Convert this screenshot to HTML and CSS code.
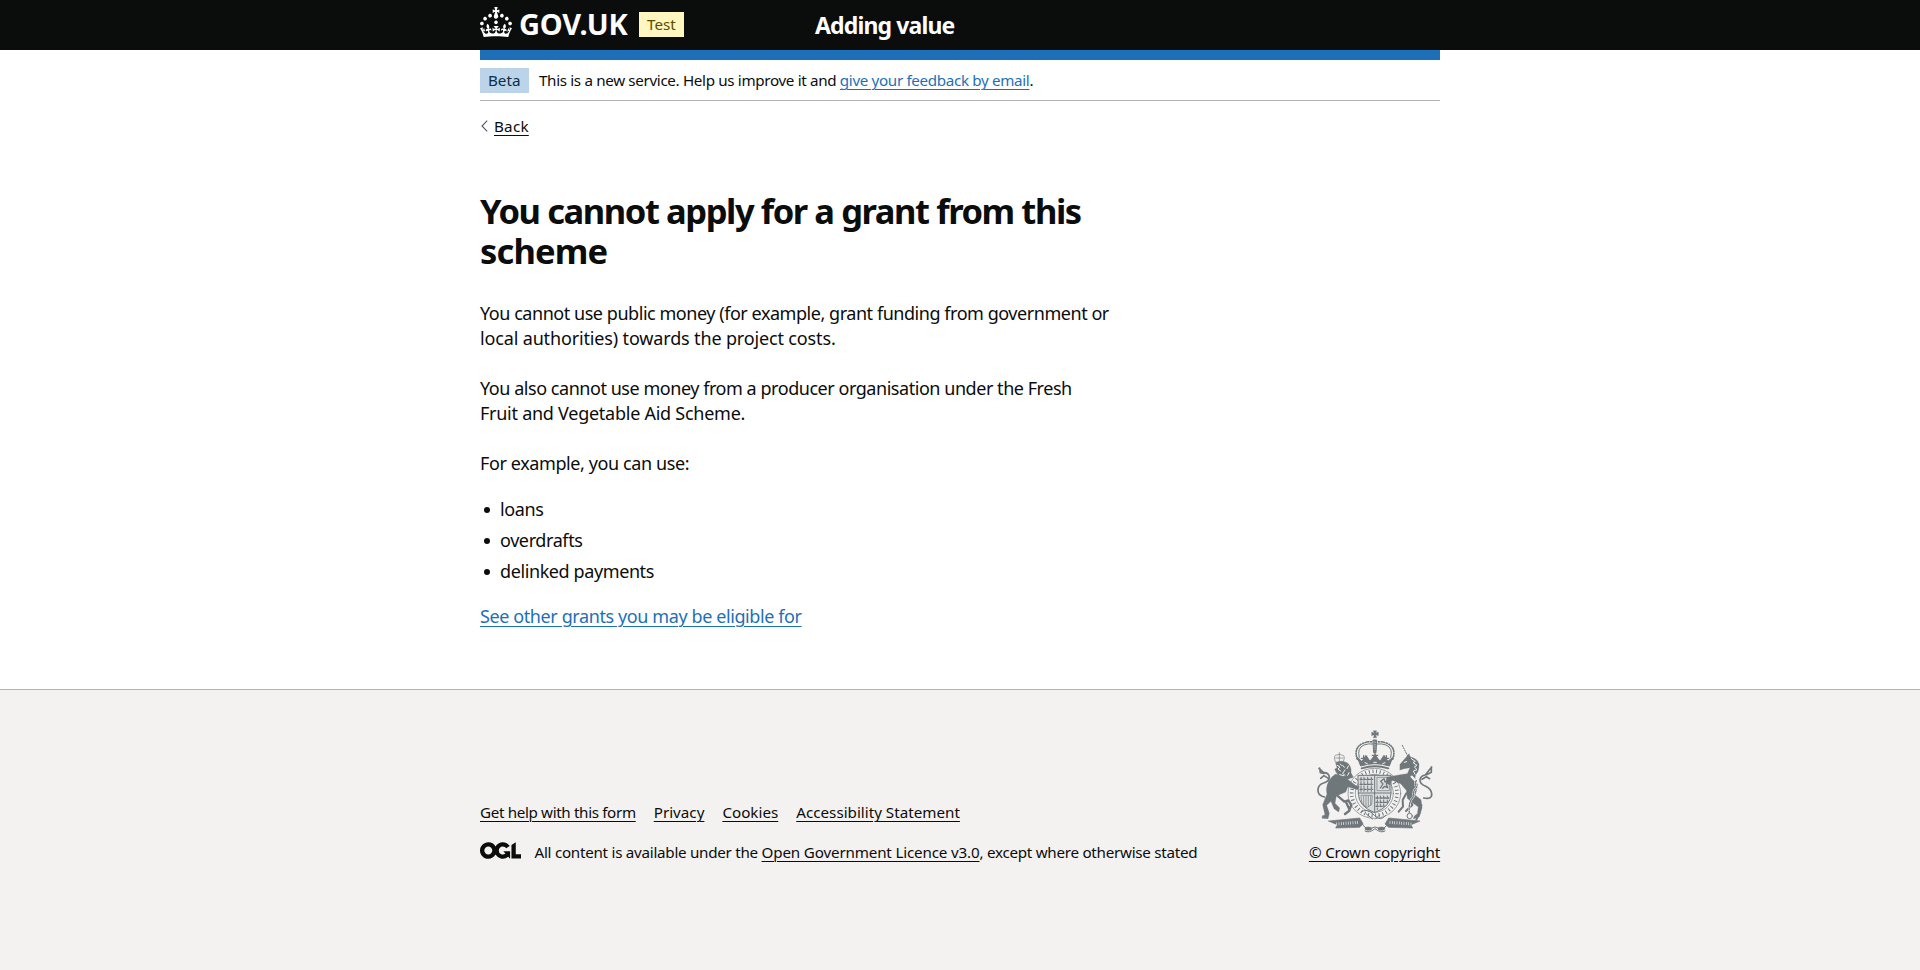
FILE: index.html
```html
<!DOCTYPE html>
<html lang="en">
<head>
<meta charset="utf-8">
<title>You cannot apply for a grant from this scheme</title>
<link rel="stylesheet" href="styles.css">
</head>
<body>
<header class="header">
  <div class="container header-inner">
    <div class="header-logo">
      <svg class="crown" viewBox="0 0 32 30" width="32" height="30" aria-hidden="true"><path fill="#fff" d="M22.6 10.4c-1 .4-2-.1-2.4-1-.4-.9.1-2 1-2.4.9-.4 2 .1 2.4 1s-.1 2-1 2.4m-5.9 6.7c-.9.4-2-.1-2.4-1-.4-.9.1-2 1-2.4.9-.4 2 .1 2.4 1s-.1 2-1 2.4m10.8-3.7c-1 .4-2-.1-2.4-1-.4-.9.1-2 1-2.4.9-.4 2 .1 2.4 1s0 2-1 2.4m3.3 4.8c-1 .4-2-.1-2.4-1-.4-.9.1-2 1-2.4.9-.4 2 .1 2.4 1s-.1 2-1 2.4M17 4.7l2.3 1.2V2.5l-2.3.7-.2-.2.9-3h-3.4l.9 3-.2.2c-.1.1-2.3-.7-2.3-.7v3.4L15 4.7c.1.1.1.2.2.2l-1.3 4c-.1.2-.1.4-.1.6 0 1.1.8 2 1.9 2.2h.7c1-.2 1.9-1.1 1.9-2.1 0-.2 0-.4-.1-.6l-1.3-4c-.1-.2 0-.2.1-.3m-7.6 5.7c.9.4 2-.1 2.4-1 .4-.9-.1-2-1-2.4-.9-.4-2 .1-2.4 1s0 2 1 2.4m-5 3c.9.4 2-.1 2.4-1 .4-.9-.1-2-1-2.4-.9-.4-2 .1-2.4 1s.1 2 1 2.4m-3.2 4.8c.9.4 2-.1 2.4-1 .4-.9-.1-2-1-2.4-.9-.4-2 .1-2.4 1s0 2 1 2.4m14.8 11c4.4 0 8.6.3 12.3.8 1.1-4.5 2.4-7 3.7-8.8l-2.5-.9c.2 1.3.3 1.9 0 2.7-.4-.4-.8-1.1-1.1-2.3l-1.2 4c.7-.5 1.3-.8 2-.9-1.1 2.5-2.6 3.1-3.5 3-1.1-.2-1.7-1.2-1.5-2.1.3-1.2 1.5-1.5 2.1-.1 1.1-2.3-.8-3-2-2.3 1.9-1.9 2.1-3.5.6-5.6-2.1 1.6-2.1 3.2-1.2 5.5-1.2-1.4-3.2-.6-2.5 1.6.9-1.4 2.1-.5 1.9.8-.2 1.1-1.7 2.1-3.5 1.9-2.7-.2-2.9-2.1-2.9-3.6.7-.1 1.9.5 2.9 1.9l.4-4.3c-1.1 1.1-2.1 1.4-3.2 1.4.4-1.2 2.1-3 2.1-3h-5.4s1.7 1.9 2.1 3c-1.1 0-2.1-.2-3.2-1.4l.4 4.3c1-1.4 2.2-2 2.9-1.9-.1 1.5-.2 3.4-2.9 3.6-1.9.2-3.4-.8-3.5-1.9-.2-1.3 1-2.2 1.9-.8.7-2.3-1.2-3-2.5-1.6.9-2.2.9-3.9-1.2-5.5-1.5 2-1.3 3.7.6 5.6-1.2-.7-3.1 0-2 2.3.6-1.4 1.8-1.1 2.1.1.2.9-.3 1.9-1.5 2.1-.9.2-2.4-.5-3.5-3 .6 0 1.2.3 2 .9l-1.2-4c-.3 1.1-.7 1.9-1.1 2.3-.3-.8-.2-1.4 0-2.7l-2.9.9C1.3 23 2.6 25.5 3.7 30c3.7-.5 7.9-.8 12.3-.8"/></svg>
      <span class="logotype">GOV.UK</span>
      <strong class="tag tag-test">Test</strong>
    </div>
    <a class="service-name">Adding value</a>
  </div>
</header>
<div class="container">
  <div class="brand-bar"></div>
  <div class="phase-banner">
    <strong class="tag tag-beta">Beta</strong>
    <span class="phase-text">This is a new service. Help us improve it and <a class="link">give your feedback by email</a>.</span>
  </div>
  <div class="back">
    <svg class="chevron" viewBox="0 0 7 12" width="7" height="12" aria-hidden="true"><path d="M6.2 .6L1 6l5.200 5.400" fill="none" stroke="#505a5f" stroke-width="1.1"/></svg>
    <a class="link-dark back-link">Back</a>
  </div>
  <main class="main">
    <h1 class="heading">You cannot apply for a grant from this<br><span class="heading-end">scheme</span></h1>
    <p class="body">You cannot use public money (for example, grant funding from government or<br><span class="loose">local authorities) towards the project costs.</span></p>
    <p class="body">You also cannot use money from a producer organisation under the Fresh<br><span class="semi-loose">Fruit and Vegetable Aid Scheme.</span></p>
    <p class="body short">For example, you can use:</p>
    <ul class="list">
      <li>loans</li>
      <li>overdrafts</li>
      <li>delinked payments</li>
    </ul>
    <p class="body short"><a class="link">See other grants you may be eligible for</a></p>
  </main>
</div>
<footer class="footer">
  <div class="container footer-inner">
    <div class="footer-meta">
      <div class="footer-links">
        <a class="link-dark help-link">Get help with this form</a>
        <a class="link-dark">Privacy</a>
        <a class="link-dark">Cookies</a>
        <a class="link-dark">Accessibility Statement</a>
      </div>
      <div class="licence">
        <svg class="ogl" viewBox="0 0 483.2 195.7" width="41" height="17" aria-hidden="true"><path fill="#0b0c0c" d="M421.5 142.8V.1l-50.7 32.3v161.1h112.4v-50.7zm-122.3-9.6A47.12 47.12 0 0 1 221 97.8c0-26 21.1-47.1 47.1-47.1 16.7 0 31.4 8.7 39.7 21.8l42.7-27.2A97.63 97.63 0 0 0 268.1 0c-36.5 0-68.3 20.1-85.1 49.700A98 98 0 0 0 97.800 0C43.900 0 0 43.900 0 97.800s43.900 97.800 97.800 97.800c36.500 0 68.300-20.100 85.100-49.700a97.760 97.760 0 0 0 149.600 25.400l19.400 22.200h3v-87.800h-80zM97.800 145c-26 0-47.100-21.100-47.100-47.100s21.100-47.100 47.100-47.100 47.200 21 47.200 47S123.800 145 97.800 145"/></svg>
        <span class="licence-text">All content is available under the <a class="link-dark licence-link">Open Government Licence v3.0</a>, except where otherwise stated</span>
      </div>
    </div>
    <div class="copyright">
      <svg class="arms" viewBox="80 42 352 312" width="118" height="104" aria-hidden="true">
        <g fill="none" stroke="#6f777b" stroke-linecap="round" stroke-linejoin="round">
          <!-- crown -->
          <path d="M251 44h10l-3 7 8-3v11l-8-3 3 9h-10l3-9-8 3V48l8 3z" fill="#6f777b" stroke-width="1"/>
          <path d="M251 72h10l-2 38h-6z" fill="#6f777b" stroke-width="3"/>
          <path d="M256 78v22" stroke="#f3f2f1" stroke-width="2" stroke-dasharray="2 5"/>
          <path d="M203 130q-12-34 15-47 20-9 32-4M309 130q12-34-15-47-20-9-32-4" stroke-width="5" stroke-dasharray="3 5"/>
          <path d="M209 124q-8-28 14-37 13-5 26-3M303 124q8-28-14-37-13-5-26-3" stroke-width="3"/>
          <path d="M203 124l10 26q43-14 86 0l10-26-14 12-12-18-12 18-15-20-15 20-12-18-12 18z" fill="#6f777b" stroke-width="3"/>
          <path d="M216 157q40-12 80 0" stroke-width="6"/>
          <path d="M222 119v16M290 119v16M256 106v26M215 127h14M283 127h14M248 118h16" stroke-width="4"/>
          <path d="M226 140l7 3M252 139h8M279 143l7-3" stroke="#f3f2f1" stroke-width="3"/>
          <!-- garter -->
          <ellipse cx="254" cy="232" rx="79" ry="75" stroke-width="2"/>
          <ellipse cx="254" cy="232" rx="57" ry="57" stroke-width="2"/>
          <ellipse cx="254" cy="232" rx="68" ry="66" stroke-width="11" stroke-dasharray="3 8" stroke-linecap="butt"/>
          <!-- shield -->
          <path d="M206 178h98v54q0 40-49 58-49-18-49-58z" fill="#dcddde" stroke-width="3"/>
          <path d="M255 178v111M206 231h98" stroke-width="3"/>
          <path d="M214 184v42M223 184v42M234 184v42M245 184v42" stroke-width="3" stroke-dasharray="9 4"/>
          <path d="M211 190h38M211 205h38M211 220h38" stroke-width="4" stroke-dasharray="7 5"/>
          <rect x="263" y="184" width="36" height="40" stroke-width="2"/>
          <path d="M272 216l8-12-7-8 10-8 3 10 8-5-4 12 4 10-9-4-6 6" stroke-width="4"/>
          <path d="M215 238h33l-2 28-15 9-14-15z" stroke-width="2"/>
          <path d="M222 240v28M229 240v32M236 240v32M243 240v28" stroke-width="2"/>
          <path d="M263 240v40M272 240v36M282 240v30M293 240v20" stroke-width="3" stroke-dasharray="8 4"/>
          <path d="M259 246h38M259 259h36M259 271h26" stroke-width="4" stroke-dasharray="7 5"/>
          <path d="M214 288q20-14 40 10 20 20 34 0M229 293l20 16M258 309l12-13" stroke-width="3"/>
          <!-- lion -->
          <path d="M137 137q-8-20 5-20 7-4 14 0 13 0 5 20zM149 110v27M138 126h22" stroke-width="2"/>
          <path d="M138 140q18-9 34 0 14 10 12 30l7 14-17 6 23 18 12 4-6 9-28-9-7 16-28 12-4 22 14 14-3 12-14-10-9-22-13 12 8 24-4 16-18-1 1-8 8-2-7-31 13-32q-5-20 5-38 10-16 24-24l-6-12 7-5z" fill="#6f777b" stroke-width="1"/>
          <path d="M143 239l21 18 12-4 9 14-7 18-12 9M170 260l10 22" stroke-width="7"/>
          <path d="M143 148l8 5-6 6 8 6M159 148l5 6M166 162l-7 10 7 6M150 176l12 3M176 150l-4 8M134 170l8 4M178 170l-4 8M152 144l3 4" stroke="#f3f2f1" stroke-width="3"/>
          <path d="M104 243q-21-6-19-23 2-15 17-19 18-6 17-18-3-14-17-13l-14-13M90 156l2 14 11 2M117 188l-14-9-10 8" stroke-width="5"/>
          <!-- unicorn -->
          <path d="M338 88l17 34" stroke-width="3" stroke-dasharray="4 4"/>
          <path d="M331 145l21-24 6-8 4 10q22 4 26 22 1 20-10 31-6 13 6 30-3 19-8 31l18 14 3 24-8 27-18 7 3-9 9-7 3-20-19-14-14-12-3-24-17-20-29-12-2 16-13-5 2-18 41-8 21-3 8-18-18 3-12 4z" fill="#6f777b" stroke-width="1"/>
          <path d="M350 232l-11 20 1 20-13 15M360 245l8 22-19 18M395 267l-6 26-9 18" stroke-width="6"/>
          <path d="M365 128l12 8-7 4 12 8-8 5 8 8-11 4 5 10M344 139l7-2" stroke="#f3f2f1" stroke-width="3"/>
          <path d="M380 194q-7 12 1 20-13 12-8 26-18 18-14 49M366 182l15 16" stroke="#f3f2f1" stroke-width="7"/>
          <path d="M380 194q-7 12 1 20-13 12-8 26-18 18-14 49" stroke-width="4" stroke-dasharray="5 4"/>
          <circle cx="360" cy="300" r="8" stroke-width="3"/>
          <path d="M402 246q26 5 24-13-2-15-18-22-18-7-17-20 2-12 16-14l19-24M425 153v16l-14 7M397 190l13-8 10 6" stroke-width="5"/>
          <!-- motto scroll -->
          <path d="M117 315l93-9 10 18-10 10-72 2 5-9z" fill="#6f777b" stroke-width="2"/>
          <path d="M390 315l-93-9-11 18 11 10 72 2-5-9z" fill="#6f777b" stroke-width="2"/>
          <path d="M140 324l68-5M300 319l68 5" stroke="#f3f2f1" stroke-width="9" stroke-dasharray="2 5" stroke-linecap="butt"/>
          <path d="M215 315q8 34 41 18 33 16 41-18M226 345q12 8 30-7 18 15 30 7" stroke-width="3"/>
          <ellipse cx="236" cy="338" rx="10" ry="5" fill="#6f777b" stroke-width="2"/>
          <ellipse cx="275" cy="338" rx="10" ry="5" fill="#6f777b" stroke-width="2"/>
        </g>
      </svg>
      <a class="link-dark copyright-link">© Crown copyright</a>
    </div>
  </div>
</footer>
</body>
</html>
```
FILE: styles.css
```css
* { box-sizing: border-box; }
body {
  margin: 0;
  min-height: 970px;
  display: flex;
  flex-direction: column;
  background: #fff;
  color: #0b0c0c;
  font-family: "Noto Sans", "Open Sans", sans-serif;
  font-size: 15.2px;
  line-height: 20px;
}
.container { width: 960px; margin: 0 auto; }
.header { background: #0b0c0c; height: 50px; color: #fff; }
.header-inner { display: flex; height: 50px; }
.header-logo { display: flex; width: 335px; padding-top: 7px; }
.logotype {
  margin-left: 7px;
  width: 109px;
  font-size: 29px;
  font-weight: 700;
  line-height: 34px;
  letter-spacing: -0.2px;
}
.tag { font-weight: 400; height: 25px; line-height: 24px; padding: 0 8px; white-space: nowrap; }
.tag-test { width: 45px; margin: 5px 0 0 11px; background: #fff7bf; color: #594d00; }
.tag-beta { width: 49px; background: #bbd4ea; color: #0c2d4a; line-height: 25px; }
.service-name {
  font-size: 23px;
  font-weight: 700;
  line-height: 50px;
  letter-spacing: -0.86px;
  white-space: nowrap;
}
.brand-bar { height: 10px; background: #1d70b8; }
.phase-banner {
  display: flex;
  gap: 10px;
  height: 41px;
  padding-top: 8px;
  border-bottom: 1px solid #b1b4b6;
}
.phase-text { line-height: 24px; letter-spacing: -0.34px; white-space: nowrap; }
.link, .link-dark { text-decoration: underline; text-decoration-thickness: 1px; text-underline-offset: 3px; }
.link { color: #1d70b8; }
.link-dark { color: #0b0c0c; }
.back { display: flex; gap: 6px; padding: 15px 0 0 1px; height: 35px; }
.back-link { letter-spacing: 0.25px; }
.chevron { margin-top: 4px; }
.main { padding-top: 55px; height: 553px; }
.heading {
  margin: 0 0 30px;
  font-size: 34.5px;
  line-height: 40px;
  font-weight: 700;
  letter-spacing: -1.42px;
  white-space: nowrap;
}
.heading-end { letter-spacing: -0.85px; }
.body, .list { font-size: 18px; line-height: 25px; letter-spacing: -0.455px; }
.body { margin: 0 0 25px; white-space: nowrap; }
.loose { letter-spacing: -0.15px; }
.semi-loose { letter-spacing: -0.26px; }
.short, .list { letter-spacing: -0.4px; }
.list { margin: -4px 0 20px; padding: 0; list-style: none; }
.list li { display: flex; align-items: center; gap: 10px; margin-bottom: 6px; padding-left: 4px; }
.list li::before { content: ""; width: 6px; height: 6px; border-radius: 50%; background: #0b0c0c; }
.footer { flex: 1; background: #f3f2f1; border-top: 1px solid #b1b4b6; padding-top: 40px; }
.footer-inner { display: flex; justify-content: space-between; align-items: flex-end; }
.footer-links { display: flex; gap: 18px; margin-bottom: 20px; white-space: nowrap; }
.help-link { letter-spacing: -0.35px; }
.licence { display: flex; align-items: flex-start; gap: 13.500px; height: 20px; white-space: nowrap; }
.licence-text { letter-spacing: -0.27px; }
.licence-link { letter-spacing: -0.17px; }
.copyright { display: flex; flex-direction: column; align-items: center; width: 131px; white-space: nowrap; }
.copyright-link { letter-spacing: -0.16px; }
.arms { margin-bottom: 8px; }
```
